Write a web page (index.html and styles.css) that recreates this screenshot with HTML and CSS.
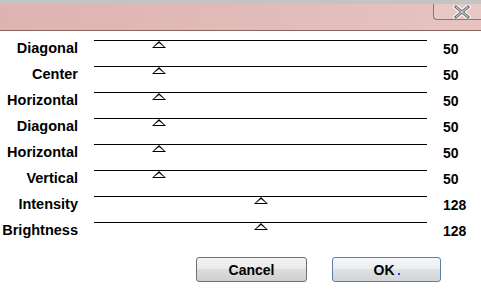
FILE: index.html
```html
<!DOCTYPE html>
<html lang="en">
<head>
    <meta charset="UTF-8">
    <title>Sliders</title>
    <link rel="stylesheet" href="styles.css">
</head>
<body>
    <div class="titlebar">
        <div class="close-btn">
            <svg width="18" height="14" viewBox="0 0 18 14">
                <path d="M3 2 L15 12 M15 2 L3 12" stroke="#ffffff" stroke-width="5" stroke-linecap="square"/>
                <path d="M3 2 L15 12 M15 2 L3 12" stroke="#7a7a7a" stroke-width="3" stroke-linecap="square"/>
                <path d="M3 2 L15 12 M15 2 L3 12" stroke="#d8d8d8" stroke-width="1"/>
            </svg>
        </div>
    </div>

    <div class="sliders">
        <div class="label">Diagonal</div>
        <div class="track"><span class="thumb" style="left: 58px"></span></div>
        <div class="value">50</div>

        <div class="label">Center</div>
        <div class="track"><span class="thumb" style="left: 58px"></span></div>
        <div class="value">50</div>

        <div class="label">Horizontal</div>
        <div class="track"><span class="thumb" style="left: 58px"></span></div>
        <div class="value">50</div>

        <div class="label">Diagonal</div>
        <div class="track"><span class="thumb" style="left: 58px"></span></div>
        <div class="value">50</div>

        <div class="label">Horizontal</div>
        <div class="track"><span class="thumb" style="left: 58px"></span></div>
        <div class="value">50</div>

        <div class="label">Vertical</div>
        <div class="track"><span class="thumb" style="left: 58px"></span></div>
        <div class="value">50</div>

        <div class="label">Intensity</div>
        <div class="track"><span class="thumb" style="left: 160px"></span></div>
        <div class="value">128</div>

        <div class="label">Brightness</div>
        <div class="track"><span class="thumb" style="left: 160px"></span></div>
        <div class="value">128</div>
    </div>

    <div class="buttons">
        <button class="btn">Cancel</button>
        <button class="btn btn-ok">OK<span class="focus-dot"></span></button>
    </div>
</body>
</html>
```

FILE: styles.css
```css
body {
    margin: 0;
    padding: 0;
    background-color: #fff;
    font-family: "Liberation Sans", Arial, sans-serif;
    font-weight: bold;
    font-size: 14px;
    color: #000;
    width: 481px;
    height: 289px;
    overflow: hidden;
}
.titlebar {
    height: 26px;
    border-top: 4px solid #c4c4c4;
    border-bottom: 1px solid #8c6464;
    background: linear-gradient(to right, #dfb3b1, #e2bcba 60%, #e6c4c1);
    display: flex;
    justify-content: flex-end;
    align-items: flex-start;
}
.close-btn {
    width: 40px;
    height: 15px;
    margin-right: -1px;
    border-left: 1px solid #8a7474;
    border-bottom: 1px solid #8a7474;
    border-bottom-left-radius: 4px;
    background: #e8c8c6;
    display: flex;
    justify-content: center;
    padding-left: 8px;
    box-sizing: content-box;
}
.close-btn svg {
    margin-top: 1px;
}
.sliders {
    display: grid;
    grid-template-columns: 78px 333px 38px;
    grid-auto-rows: 26px;
    column-gap: 16px;
    padding-top: 9px;
}
.label {
    text-align: right;
    line-height: 16px;
    font-size: 14.5px;
}
.track {
    position: relative;
    border-top: 1px solid #000;
}
.thumb {
    position: absolute;
    top: 0;
    width: 0;
    height: 0;
    border-left: 7px solid transparent;
    border-right: 7px solid transparent;
    border-bottom: 7px solid #000;
}
.thumb::after {
    content: "";
    position: absolute;
    left: -5px;
    top: 2px;
    border-left: 5px solid transparent;
    border-right: 5px solid transparent;
    border-bottom: 4px solid #fff;
}
.value {
    line-height: 16px;
    padding-top: 1px;
}
.buttons {
    display: flex;
    gap: 25px;
    padding-left: 196px;
    margin-top: 9px;
}
.btn {
    width: 111px;
    height: 25px;
    font-family: "Liberation Sans", Arial, sans-serif;
    font-weight: bold;
    font-size: 14px;
    color: #000;
    border: 1px solid #707070;
    border-radius: 3px;
    background: linear-gradient(to bottom, #f2f2f2 0%, #ebebeb 45%, #dddddd 50%, #cfcfcf 100%);
    padding: 0;
    position: relative;
}
.btn-ok {
    width: 109px;
    border-color: #5c7fa8;
    background: linear-gradient(to bottom, #f4f6f8 0%, #eceef0 45%, #dfe1e4 50%, #d2d5d8 100%);
}
.focus-dot {
    display: inline-block;
    width: 2px;
    height: 2px;
    background: #3a3af0;
    margin-left: 3px;
}
```
